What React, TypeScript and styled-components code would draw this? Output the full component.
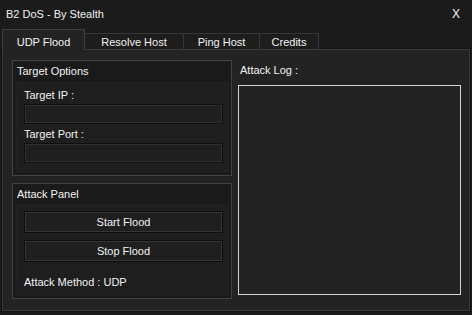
import React, { FC } from 'react';
import styled, { createGlobalStyle } from 'styled-components';

const GlobalStyle = createGlobalStyle`
  html, body {
    margin: 0;
    padding: 0;
    background: #1b1b1b;
  }
  * {
    box-sizing: border-box;
  }
`;

const Window = styled.div`
  width: 472px;
  height: 315px;
  background: #1b1b1b;
  color: #f2f2f2;
  font-family: 'Liberation Sans', Arial, sans-serif;
  font-size: 11px;
  display: flex;
  flex-direction: column;
  overflow: hidden;
`;

const TitleBar = styled.div`
  height: 28px;
  display: flex;
  align-items: center;
  justify-content: space-between;
  padding: 0 12px 0 6px;
  line-height: 14px;
`;

const CloseButton = styled.span`
  font-size: 12px;
  color: #f2f2f2;
  cursor: default;
`;

const TabRow = styled.div`
  height: 21px;
  display: flex;
  align-items: flex-end;
  padding-left: 2px;
`;

const Tab = styled.div<{ w: number; active?: boolean }>`
  width: ${p => p.w}px;
  height: ${p => (p.active ? 21 : 16)}px;
  margin-bottom: ${p => (p.active ? -1 : 0)}px;
  position: relative;
  z-index: ${p => (p.active ? 2 : 1)};
  background: ${p => (p.active ? '#232323' : '#1d1d1d')};
  border: 1px solid ${p => (p.active ? '#3f3f3f' : '#363636')};
  border-bottom: none;
  margin-left: ${p => (p.active ? 0 : -1)}px;
  padding-top: ${p => (p.active ? 5 : 1)}px;
  text-align: center;
  line-height: 14px;
  color: #f2f2f2;
  &:first-child {
    margin-left: 0;
  }
`;

const Panel = styled.div`
  height: 262px;
  margin: 0 2px;
  background: #232323;
  border: 1px solid #3a3a3a;
  box-shadow: 0 0 0 1px #141414;
  display: flex;
  gap: 6px;
  padding: 10px 7px 0 9px;
`;

const LeftColumn = styled.div`
  width: 220px;
  display: flex;
  flex-direction: column;
  gap: 7px;
`;

const GroupBox = styled.div`
  height: 116px;
  background: #1a1a1a;
  border: 1px solid #424242;
  display: flex;
  flex-direction: column;
  padding: 0 2px 3px 3px;
`;

const GroupTitle = styled.div`
  height: 21px;
  line-height: 21px;
  padding-left: 1px;
`;

const GroupInner = styled.div`
  flex: 1;
  background: #1e1e1e;
  border: 1px solid #222;
  padding: 5px 5px 0 7px;
  display: flex;
  flex-direction: column;
`;

const FieldLabel = styled.div`
  line-height: 14px;
  height: 14px;
  margin-bottom: 2px;
`;

const TextInput = styled.div`
  height: 20px;
  background: #1f1f1f;
  border: 1px solid #0f0f0f;
  box-shadow: 0 0 0 1px #2f2f2f inset;
  margin-bottom: 3px;
`;

const Button = styled.div`
  height: 22px;
  background: #1f1f1f;
  border: 1px solid #0d0d0d;
  box-shadow: 0 0 0 1px #353535 inset;
  display: flex;
  align-items: center;
  justify-content: center;
  line-height: 14px;
  margin-bottom: 7px;
  cursor: default;
`;

const MethodText = styled.div`
  line-height: 14px;
  margin-top: 6px;
`;

const RightColumn = styled.div`
  width: 223px;
  display: flex;
  flex-direction: column;
`;

const LogLabel = styled.div`
  height: 25px;
  line-height: 14px;
  padding: 3px 0 0 2px;
`;

const LogBox = styled.div`
  height: 210px;
  background: #232323;
  border: 1px solid #d4d4d4;
`;

const tabs = [
  { name: 'UDP Flood', w: 83 },
  { name: 'Resolve Host', w: 100 },
  { name: 'Ping Host', w: 77 },
  { name: 'Credits', w: 60 },
];

const App: FC = () => {
  return (
    <>
      <GlobalStyle />
      <Window>
        <TitleBar>
          <span>B2 DoS - By Stealth</span>
          <CloseButton>X</CloseButton>
        </TitleBar>
        <TabRow>
          {tabs.map((tab, idx) => (
            <Tab key={tab.name} w={tab.w} active={idx === 0}>
              {tab.name}
            </Tab>
          ))}
        </TabRow>
        <Panel>
          <LeftColumn>
            <GroupBox>
              <GroupTitle>Target Options</GroupTitle>
              <GroupInner>
                <FieldLabel>Target IP :</FieldLabel>
                <TextInput />
                <FieldLabel>Target Port :</FieldLabel>
                <TextInput />
              </GroupInner>
            </GroupBox>
            <GroupBox>
              <GroupTitle>Attack Panel</GroupTitle>
              <GroupInner>
                <Button>Start Flood</Button>
                <Button>Stop Flood</Button>
                <MethodText>Attack Method : UDP</MethodText>
              </GroupInner>
            </GroupBox>
          </LeftColumn>
          <RightColumn>
            <LogLabel>Attack Log :</LogLabel>
            <LogBox />
          </RightColumn>
        </Panel>
      </Window>
    </>
  );
};

export default App;
